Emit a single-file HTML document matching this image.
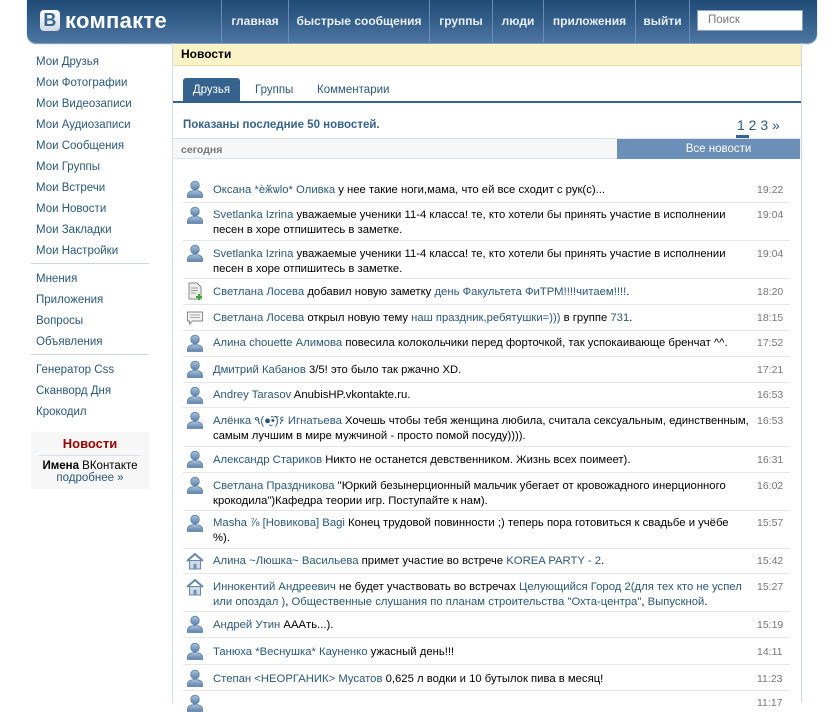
<!DOCTYPE html>
<html><head><meta charset="utf-8"><style>
*{margin:0;padding:0;box-sizing:border-box}
body{width:830px;height:700px;overflow:hidden;background:#fff;font-family:"Liberation Sans","DejaVu Sans",sans-serif;font-size:11.5px;color:#000;position:relative}
a{color:#2b587a;text-decoration:none}
.hdr{position:absolute;left:27px;top:0;width:790px;height:43px;background:linear-gradient(#1f4a76,#4d76a1);border-radius:0 0 9px 9px;box-shadow:0 1px 1px #6e8fb3}
.logo{position:absolute;left:13px;top:10px;color:#fff;font-weight:bold;font-size:22px;line-height:21px;white-space:nowrap;letter-spacing:0.3px}
.logo b{display:inline-block;width:20px;height:21px;background:linear-gradient(#fff,#cfd8e2);color:#3c6590;border-radius:4px;text-align:center;font-size:18px;line-height:21px;margin-right:5px;vertical-align:top}
.nav{position:absolute;top:0;height:43px;color:#e8eef5;font-weight:bold;font-size:12px;line-height:43px;text-align:center;border-left:1px solid #6a8db3}
.srch{position:absolute;left:670px;top:10px;width:106px;height:21px;background:#fff;border:1px solid #8aa3be;color:#777;font-size:11.5px;line-height:19px;padding-left:10px}
.menu{position:absolute;left:36px;color:#2b587a;font-size:11.5px;margin-top:2px}
.sep{position:absolute;left:31px;width:118px;height:1px;background:#d0d5db}
.box{position:absolute;left:172px;top:43px;width:630px;height:660px;border-left:1px solid #d6dee7;border-right:1px solid #cad6e2}
.abs{position:absolute;white-space:nowrap}
.row{position:absolute;left:213px;line-height:15px;font-size:11.3px;margin-top:1px;white-space:nowrap}
.tm{position:absolute;left:757px;color:#777;font-size:10.5px;margin-top:1px}
.ln{position:absolute;left:183px;width:607px;height:1px;background:#e4e8ed}
.ic{position:absolute;left:186px}
</style></head><body>
<div class="hdr">
<div class="logo"><b>В</b>компакте</div>
<div class="nav" style="left:194px;width:67px">главная</div>
<div class="nav" style="left:261px;width:141px">быстрые сообщения</div>
<div class="nav" style="left:402px;width:63px">группы</div>
<div class="nav" style="left:465px;width:51px">люди</div>
<div class="nav" style="left:516px;width:92px">приложения</div>
<div class="nav" style="left:608px;width:55px;border-right:1px solid #6a8db3">выйти</div>
<div class="srch">Поиск</div>
</div>

<div class="menu" style="top:54px">Мои Друзья</div>
<div class="menu" style="top:75px">Мои Фотографии</div>
<div class="menu" style="top:96px">Мои Видеозаписи</div>
<div class="menu" style="top:117px">Мои Аудиозаписи</div>
<div class="menu" style="top:138px">Мои Сообщения</div>
<div class="menu" style="top:159px">Мои Группы</div>
<div class="menu" style="top:180px">Мои Встречи</div>
<div class="menu" style="top:201px">Мои Новости</div>
<div class="menu" style="top:222px">Мои Закладки</div>
<div class="menu" style="top:243px">Мои Настройки</div>
<div class="sep" style="top:263px"></div>
<div class="menu" style="top:271px">Мнения</div>
<div class="menu" style="top:292px">Приложения</div>
<div class="menu" style="top:313px">Вопросы</div>
<div class="menu" style="top:334px">Объявления</div>
<div class="sep" style="top:354px"></div>
<div class="menu" style="top:362px">Генератор Css</div>
<div class="menu" style="top:383px">Сканворд Дня</div>
<div class="menu" style="top:404px">Крокодил</div>
<div class="abs" style="left:31px;top:432px;width:118px;height:57px;background:#f7f7f7;text-align:center">
<div style="color:#a00000;font-weight:bold;font-size:13px;margin-top:4px">Новости</div>
<div style="height:1px;background:#dde2e8;margin:4px 8px 0"></div>
<div style="margin-top:4px"><b>Имена</b> ВКонтакте</div>
<div style="color:#2b587a">подробнее »</div>
</div>

<div class="box"></div>
<div class="abs" style="left:173px;top:44px;width:628px;height:22px;background:#fbf3c8;border-bottom:1px solid #e8dd9d;font-weight:bold;font-size:12px;line-height:21px;padding-left:8px">Новости</div>
<div class="abs" style="left:183px;top:78px;width:57px;height:23px;background:#36638e;border-radius:3px 3px 0 0;color:#fff;line-height:24px;text-align:center">Друзья</div>
<div class="abs" style="left:255px;top:84px;color:#2b587a">Группы</div>
<div class="abs" style="left:317px;top:84px;color:#2b587a">Комментарии</div>
<div class="abs" style="left:173px;top:101px;width:628px;height:2px;background:#36638e"></div>
<div class="abs" style="left:183px;top:119px;color:#36638e;font-weight:bold;font-size:11.5px">Показаны последние 50 новостей.</div>
<div class="abs" style="left:737px;top:117px;color:#2b587a;font-size:14px">1 2 3 »</div>
<div class="abs" style="left:736px;top:135px;width:13px;height:3px;background:#36638e"></div>
<div class="abs" style="left:173px;top:138px;width:628px;height:21px;background:#f7f7f7;border-top:1px solid #dde3e9;border-bottom:1px solid #dde3e9"></div>
<div class="abs" style="left:181px;top:144px;color:#777;font-weight:bold;font-size:10.5px">сегодня</div>
<div class="abs" style="left:617px;top:139px;width:183px;height:20px;background:#6b8fb6;color:#fff;line-height:20px;text-align:center;padding-left:20px">Все новости</div>

<svg width="0" height="0" style="position:absolute"><defs>
<linearGradient id="g" x1="0" y1="0" x2="0" y2="1"><stop offset="0" stop-color="#a9c2dc"/><stop offset="1" stop-color="#5c82ab"/></linearGradient>
<symbol id="p" viewBox="0 0 18 18"><circle cx="9" cy="5.5" r="4.3" fill="url(#g)" stroke="#5a7fa6" stroke-width=".8"/><path d="M1.5 17.5v-2.5c0-3 3.5-4.5 7.5-4.5s7.5 1.5 7.5 4.5v2.5z" fill="url(#g)" stroke="#5a7fa6" stroke-width=".8"/></symbol>
<symbol id="n" viewBox="0 0 18 18"><path d="M3 1h8l4 4v12H3z" fill="#eee" stroke="#888"/><path d="M5 6h7M5 8.5h7M5 11h5" stroke="#999"/><path d="M12 12h2v2h2v2h-2v2h-2v-2h-2v-2h2z" fill="#3a3"/></symbol>
<symbol id="c" viewBox="0 0 18 18"><path d="M1.5 3h15v9h-10l-3 3v-3h-2z" fill="#f3f3f3" stroke="#888"/><path d="M4 6h10M4 8.5h10" stroke="#aaa"/></symbol>
<symbol id="h" viewBox="0 0 18 18"><path d="M1 9L9 2l8 7" fill="none" stroke="#6688aa" stroke-width="2"/><path d="M3.5 8.5h11v8.5h-11z" fill="#cdd9e6" stroke="#6688aa"/><path d="M7.5 12h3v5h-3z" fill="#7090b0"/></symbol>
</defs></svg>

<svg class="ic" style="top:180px" width="18" height="18"><use href="#p"/></svg>
<div class="row" style="top:182px"><a>Оксана *ѐӂѡlo* Оливка</a> у нее такие ноги,мама, что ей все сходит с рук(с)...</div><div class="tm" style="top:183px">19:22</div>
<div class="ln" style="top:202px"></div>
<svg class="ic" style="top:206px" width="18" height="18"><use href="#p"/></svg>
<div class="row" style="top:207px"><a>Svetlanka Izrina</a> уважаемые ученики 11-4 класса! те, кто хотели бы принять участие в исполнении<br>песен в хоре отпишитесь в заметке.</div><div class="tm" style="top:208px">19:04</div>
<div class="ln" style="top:240px"></div>
<svg class="ic" style="top:244px" width="18" height="18"><use href="#p"/></svg>
<div class="row" style="top:246px"><a>Svetlanka Izrina</a> уважаемые ученики 11-4 класса! те, кто хотели бы принять участие в исполнении<br>песен в хоре отпишитесь в заметке.</div><div class="tm" style="top:247px">19:04</div>
<div class="ln" style="top:278px"></div>
<svg class="ic" style="top:282px" width="18" height="18"><use href="#n"/></svg>
<div class="row" style="top:284px"><a>Светлана Лосева</a> добавил новую заметку <a>день Факультета ФиТРМ!!!!читаем!!!!</a>.</div><div class="tm" style="top:285px">18:20</div>
<div class="ln" style="top:304px"></div>
<svg class="ic" style="top:309px" width="18" height="18"><use href="#c"/></svg>
<div class="row" style="top:310px"><a>Светлана Лосева</a> открыл новую тему <a>наш праздник,ребятушки=)))</a> в группе <a>731</a>.</div><div class="tm" style="top:311px">18:15</div>
<div class="ln" style="top:330px"></div>
<svg class="ic" style="top:334px" width="18" height="18"><use href="#p"/></svg>
<div class="row" style="top:335px"><a>Алина chouette Алимова</a> повесила колокольчики перед форточкой, так успокаивающе бренчат ^^.</div><div class="tm" style="top:336px">17:52</div>
<div class="ln" style="top:356px"></div>
<svg class="ic" style="top:360px" width="18" height="18"><use href="#p"/></svg>
<div class="row" style="top:362px"><a>Дмитрий Кабанов</a> 3/5! это было так ржачно XD.</div><div class="tm" style="top:363px">17:21</div>
<div class="ln" style="top:382px"></div>
<svg class="ic" style="top:386px" width="18" height="18"><use href="#p"/></svg>
<div class="row" style="top:387px"><a>Andrey Tarasov</a> AnubisHP.vkontakte.ru.</div><div class="tm" style="top:388px">16:53</div>
<div class="ln" style="top:407px"></div>
<svg class="ic" style="top:411px" width="18" height="18"><use href="#p"/></svg>
<div class="row" style="top:413px"><a>Алёнка ٩(●̮̮̃•̃)۶ Игнатьева</a> Хочешь чтобы тебя женщина любила, считала сексуальным, единственным,<br>самым лучшим в мире мужчиной - просто помой посуду)))).</div><div class="tm" style="top:414px">16:53</div>
<div class="ln" style="top:446px"></div>
<svg class="ic" style="top:450px" width="18" height="18"><use href="#p"/></svg>
<div class="row" style="top:452px"><a>Александр Стариков</a> Никто не останется девственником. Жизнь всех поимеет).</div><div class="tm" style="top:453px">16:31</div>
<div class="ln" style="top:472px"></div>
<svg class="ic" style="top:476px" width="18" height="18"><use href="#p"/></svg>
<div class="row" style="top:478px"><a>Светлана Праздникова</a> "Юркий безынерционный мальчик убегает от кровожадного инерционного<br>крокодила")Кафедра теории игр. Поступайте к нам).</div><div class="tm" style="top:479px">16:02</div>
<div class="ln" style="top:510px"></div>
<svg class="ic" style="top:514px" width="18" height="18"><use href="#p"/></svg>
<div class="row" style="top:515px"><a>Masha ⅞ [Новикова] Bagi</a> Конец трудовой повинности ;) теперь пора готовиться к свадьбе и учёбе<br>%).</div><div class="tm" style="top:516px">15:57</div>
<div class="ln" style="top:548px"></div>
<svg class="ic" style="top:552px" width="18" height="18"><use href="#h"/></svg>
<div class="row" style="top:553px"><a>Алина ~Люшка~ Васильева</a> примет участие во встрече <a>KOREA PARTY - 2</a>.</div><div class="tm" style="top:554px">15:42</div>
<div class="ln" style="top:573px"></div>
<svg class="ic" style="top:578px" width="18" height="18"><use href="#h"/></svg>
<div class="row" style="top:579px"><a>Иннокентий Андреевич</a> не будет участвовать во встречах <a>Целующийся Город 2(для тех кто не успел</a><br><a>или опоздал )</a>, <a>Общественные слушания по планам строительства "Охта-центра"</a>, <a>Выпускной</a>.</div><div class="tm" style="top:580px">15:27</div>
<div class="ln" style="top:611px"></div>
<svg class="ic" style="top:615px" width="18" height="18"><use href="#p"/></svg>
<div class="row" style="top:617px"><a>Андрей Утин</a> AAAть...).</div><div class="tm" style="top:618px">15:19</div>
<div class="ln" style="top:637px"></div>
<svg class="ic" style="top:642px" width="18" height="18"><use href="#p"/></svg>
<div class="row" style="top:644px"><a>Танюха *Веснушка* Кауненко</a> ужасный день!!!</div><div class="tm" style="top:645px">14:11</div>
<div class="ln" style="top:664px"></div>
<svg class="ic" style="top:669px" width="18" height="18"><use href="#p"/></svg>
<div class="row" style="top:671px"><a>Степан &lt;НЕОРГАНИК&gt; Мусатов</a> 0,625 л водки и 10 бутылок пива в месяц!</div><div class="tm" style="top:672px">11:23</div>
<div class="ln" style="top:690px"></div>
<svg class="ic" style="top:694px" width="18" height="18"><use href="#p"/></svg>
<div class="tm" style="top:696px">11:17</div>
</body></html>
